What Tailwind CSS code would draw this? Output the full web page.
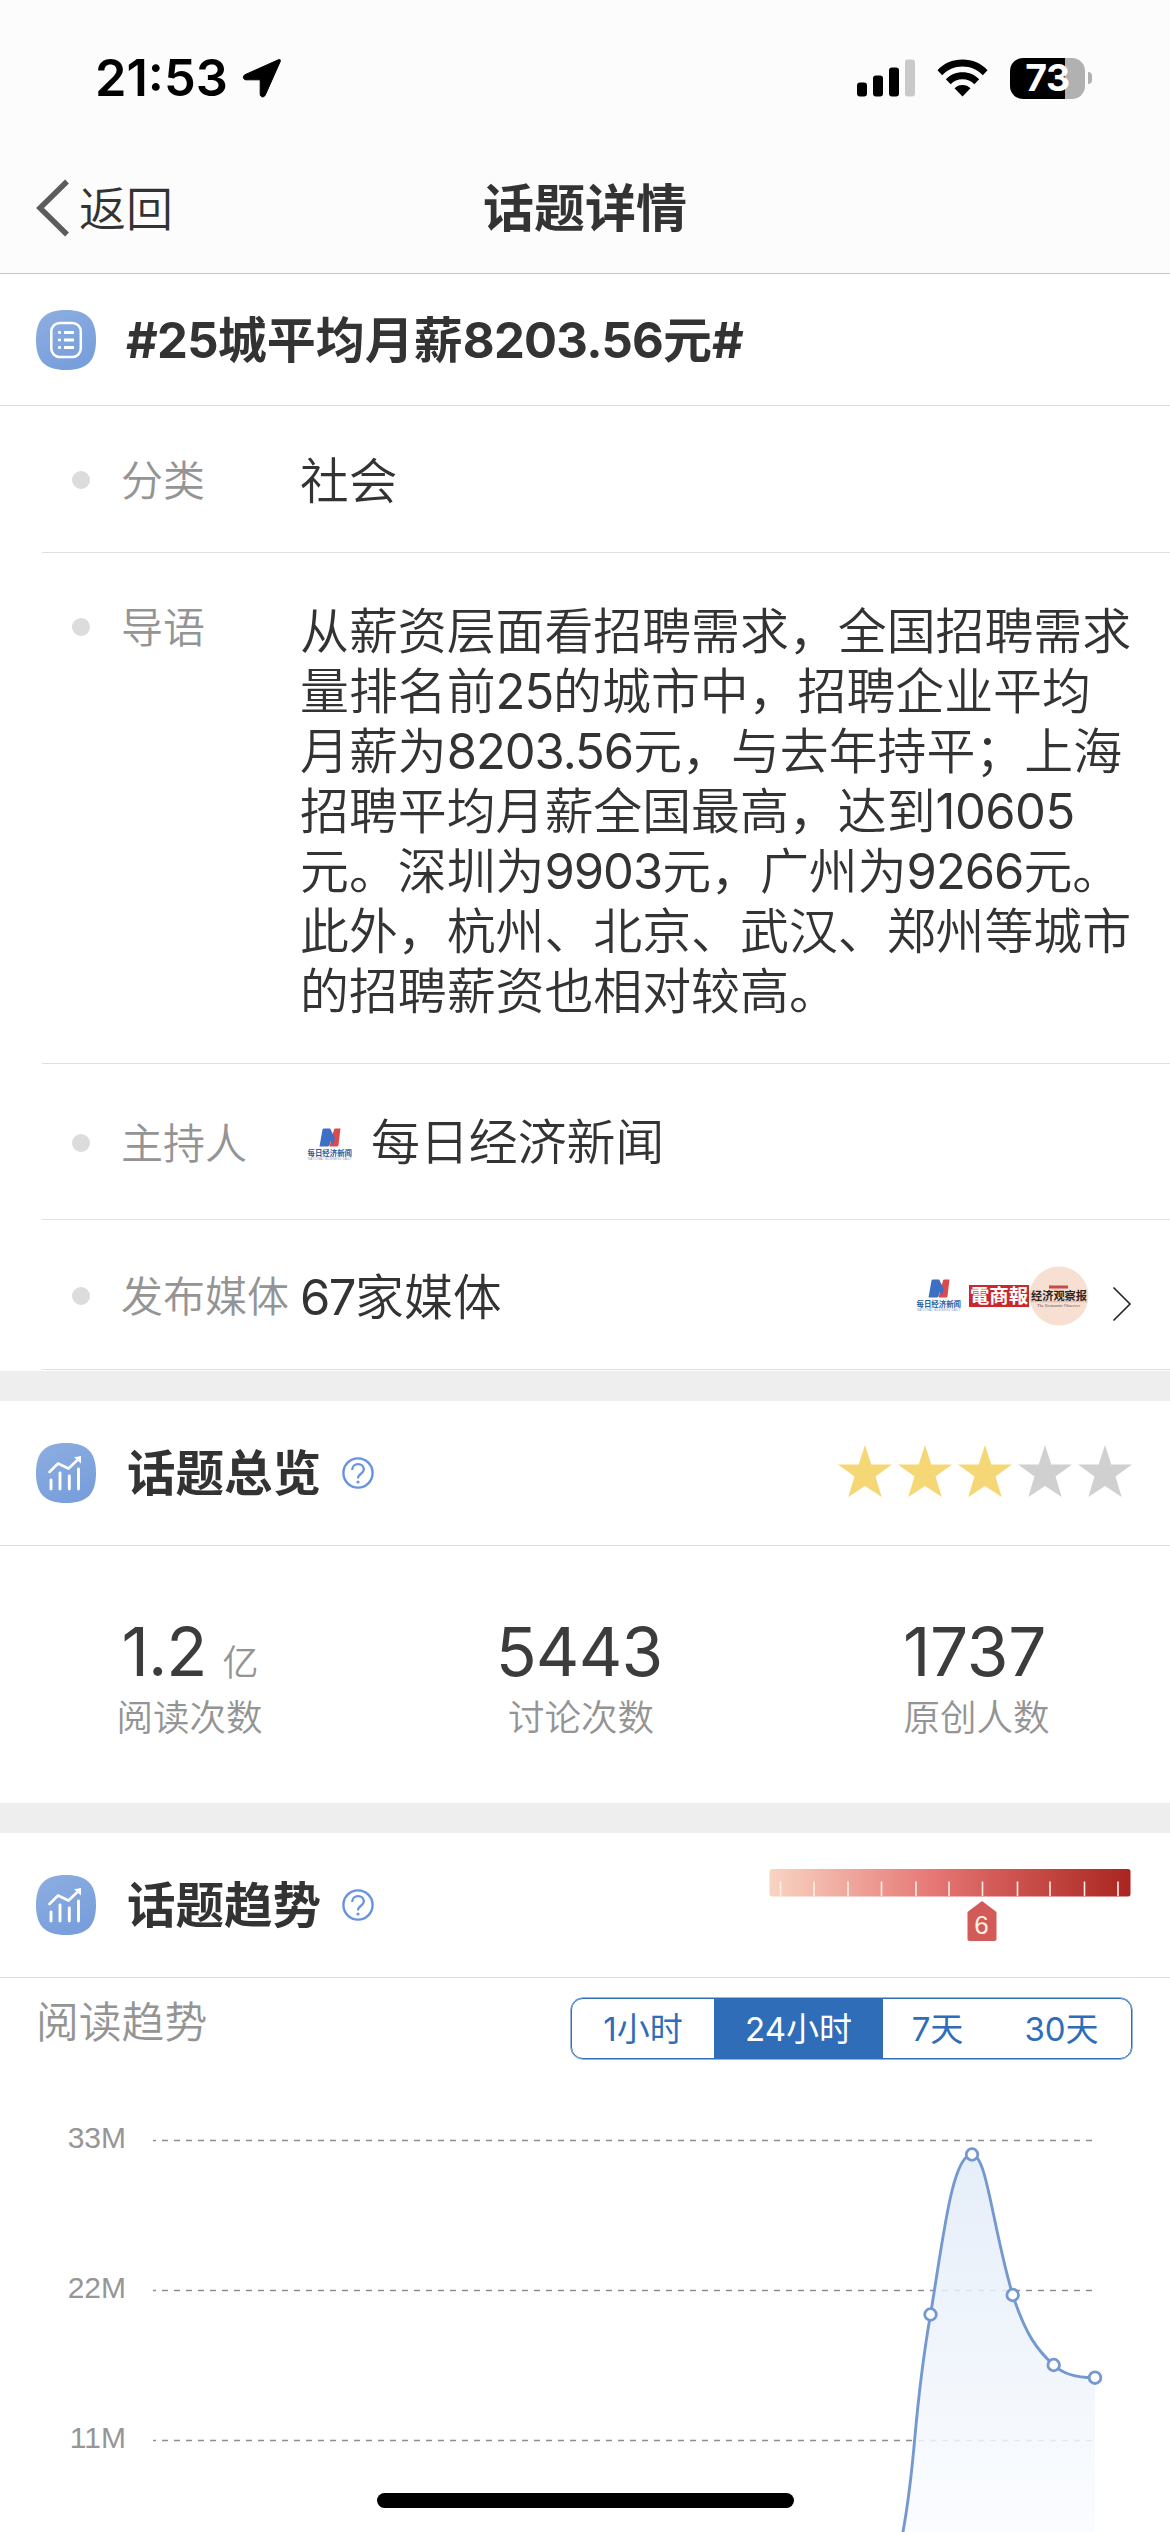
<!DOCTYPE html>
<html lang="zh-CN">
<head>
<meta charset="utf-8">
<title>话题详情</title>
<script src="https://cdn.jsdelivr.net/npm/@tailwindcss/browser@4"></script>
</head>
<body class="w-[1170px] h-[2532px] overflow-hidden bg-white font-['Inter','Noto_Sans_CJK_SC',sans-serif] text-[#333]">
<svg class="absolute size-0" aria-hidden="true">
  <defs>
    <linearGradient id="badge" x1="0.2" y1="0" x2="0.7" y2="1">
      <stop offset="0" stop-color="#8bade0"/><stop offset="1" stop-color="#779edb"/>
    </linearGradient>
    <symbol id="squircle" viewBox="0 0 60 60">
      <path d="M30 0C51 0 60 9 60 30S51 60 30 60 0 51 0 30 9 0 30 0Z" fill="url(#badge)"/>
    </symbol>
    <symbol id="trend" viewBox="0 0 60 60">
      <path d="M30 0C51 0 60 9 60 30S51 60 30 60 0 51 0 30 9 0 30 0Z" fill="url(#badge)"/>
      <path d="M13.500 29L22 20.500L32.500 25.500L43 15.500" fill="none" stroke="#fff" stroke-width="2.600" stroke-linecap="round" stroke-linejoin="round"/>
      <path d="M38 14.200L45 13V20.500Z" fill="#fff"/>
      <path d="M15 37V46M24 30V46M33.300 33V46M42.500 26V46" stroke="#fff" stroke-width="2.900" stroke-linecap="round"/>
    </symbol>
    <symbol id="help" viewBox="0 0 32 32">
      <circle cx="16" cy="16" r="14.600" fill="none" stroke="#6892e3" stroke-width="2.400"/>
      <path d="M10.200 13C10.200 9.400 12.600 7.200 16 7.200S21.800 9.400 21.800 12.500C21.800 16.700 16 16.500 16 21.500" fill="none" stroke="#6892e3" stroke-width="2.300"/>
      <circle cx="16" cy="25" r="1.600" fill="#6892e3"/>
    </symbol>
    <symbol id="star" viewBox="0 0 54 52">
      <path d="M27 0L33.300 19.500H54L37.500 31.500L43.700 52L27 41L10.300 52L16.500 31.500L0 19.500H20.700Z"/>
    </symbol>
    <symbol id="nbd" viewBox="0 0 46 34" overflow="visible">
      <path d="M15.500 1.500Q15.800 0.500 17 0.500H23L25.500 7L23 16Q22.500 18 21 18.500H12.500Z" fill="#3d6fc4"/>
      <path d="M27 1.500Q27.300 0.500 28.500 0.500H33.500L31.500 17Q31.300 18.500 30 18.500H22.500Z" fill="#dc4a4d"/>
      <path d="M23 0.500L28 10L25.500 17L21 7Z" fill="#3d6fc4"/>
      <text x="0.500" y="28" font-size="7.500" font-weight="700" textLength="44.500" lengthAdjust="spacingAndGlyphs" fill="#2a5ca0" font-family="Noto Sans CJK SC">每日经济新闻</text>
      <text x="1" y="32.300" font-size="3" textLength="43.500" fill="#7c9dc6" font-family="Liberation Sans">NATIONAL BUSINESS DAILY</text>
    </symbol>
  </defs>
</svg>

<main class="flex flex-col">
  <header class="h-[274px] bg-[#fcfcfc] border-b border-[#c4c4c4]">
    <div class="h-[154px] flex items-center justify-between pt-[2px] pl-[95px] pr-[78px]">
      <div class="flex items-center gap-[14px]">
        <span class="text-[50.5px] leading-[60px] font-semibold text-black">21:53</span>
        <svg class="w-[40px] h-[40px]" viewBox="0 0 40 40"><path d="M36.300 1.800L3 16.700C.5 18 1 21.800 4 21.800H18.200V36C18.200 39.500 22 39.800 23.300 37L38 4C39 1.800 38 1 36.300 1.800Z" fill="#000" stroke="#000" stroke-linejoin="round"/></svg>
      </div>
      <div class="flex items-center">
        <svg class="w-[58px] h-[38px]" viewBox="0 0 58 38"><rect x="0" y="23.500" width="10" height="14" rx="3"/><rect x="16" y="16.500" width="10" height="21" rx="3"/><rect x="32" y="8.500" width="10" height="29" rx="3"/><rect x="48" y="0.500" width="10" height="37" rx="3" fill="#c9c9c9"/></svg>
        <svg class="ml-[22px] w-[51px] h-[38px]" viewBox="0 0 51 38"><path d="M25.500 .5C35.500 .5 44.500 4.500 50.500 11.200L45.800 16.200C40.500 10.700 33.500 7.500 25.500 7.500S10.500 10.700 5.200 16.200L.5 11.200C6.500 4.500 15.500 .5 25.500 .5ZM25.500 13.200C32 13.200 37.800 15.700 42.200 20.300L37.300 25.200C34.200 22 30.200 20.200 25.500 20.200S16.800 22 13.700 25.200L8.800 20.300C13.200 15.700 19 13.200 25.500 13.200ZM25.500 26C28.700 26 31.500 27.200 33.500 29.300L25.500 37.500L17.500 29.300C19.500 27.200 22.300 26 25.500 26Z"/></svg>
        <div class="ml-[22px] w-[75px] h-[41px] rounded-[13px] bg-linear-to-r from-black from-[55px] to-[#b1b1b1] to-[55px] flex items-center justify-center text-white text-[37.5px] font-bold leading-none tracking-[-0.5px]">73</div>
        <div class="ml-[3px] w-[4px] h-[12px] rounded-r-full bg-[#b1b1b1]"></div>
      </div>
    </div>
    <div class="relative h-[110px] flex items-center justify-center">
      <div class="absolute left-[36px] inset-y-0 flex items-center gap-[9px]">
        <svg class="w-[34px] h-[60px]" viewBox="0 0 34 60" fill="none" stroke="#5c5c5c" stroke-width="5.500"><path d="M31 2.500L4 29L31 55.500"/></svg>
        <span class="text-[47px] leading-[60px] font-[350]">返回</span>
      </div>
      <h1 class="text-[51px] leading-[60px] font-bold">话题详情</h1>
    </div>
  </header>

  <section class="h-[132px] flex items-center gap-[30px] pl-[36px] border-b border-[#dcdcdc]">
    <svg class="size-[60px]" viewBox="0 0 60 60"><use href="#squircle"/><g fill="none" stroke="#fff"><rect x="15.300" y="13" width="29.500" height="34" rx="8.500" stroke-width="2.500"/><path d="M22 22.500H25M22 30H25M22 37.500H25" stroke-width="2.500"/><path d="M28 22.500H38M28 30H38M28 37.500H38" stroke-width="2.800"/></g></svg>
    <h2 class="text-[49px] leading-[60px] font-bold whitespace-nowrap pt-[2px]"><span class="tracking-[-0.75px]">#25</span>城平均月薪<span class="tracking-[-0.75px]">8203.56</span>元#</h2>
  </section>

  <section class="ml-[42px]">
    <div class="h-[147px] flex items-center pl-[30px] border-b border-[#dfdfdf]">
      <i class="size-[18px] mt-[2px] rounded-full bg-[#dcdcdc]"></i>
      <span class="ml-[31px] w-[179px] pt-[3px] text-[42px] leading-[60px] font-[350] text-[#949494]">分类</span>
      <span class="pt-[5px] text-[48.7px] leading-[60px] font-[350]">社会</span>
    </div>
    <div class="h-[511px] flex items-start pl-[30px] pt-[49px] border-b border-[#dfdfdf]">
      <i class="size-[18px] mt-[16px] rounded-full bg-[#dcdcdc]"></i>
      <span class="ml-[31px] w-[179px] -mt-[4px] text-[42px] leading-[60px] font-[350] text-[#949494]">导语</span>
      <p class="text-[48.9px] leading-[60px] font-[350] whitespace-nowrap">从薪资层面看招聘需求，全国招聘需求<br>量排名前<span class="font-normal tracking-[-1px]">25</span>的城市中，招聘企业平均<br>月薪为<span class="font-normal tracking-[-1px]">8203.56</span>元，与去年持平；上海<br>招聘平均月薪全国最高，达到<span class="font-normal tracking-[-0.5px]">10605</span><br>元。深圳为<span class="font-normal tracking-[-1px]">9903</span>元，广州为<span class="font-normal tracking-[-1px]">9266</span>元。<br>此外，杭州、北京、武汉、郑州等城市<br>的招聘薪资也相对较高。</p>
    </div>
    <div class="h-[156px] flex items-center pl-[30px] pt-[2px] border-b border-[#dfdfdf]">
      <i class="size-[18px] rounded-full bg-[#dcdcdc]"></i>
      <span class="ml-[31px] w-[186px] pt-[2px] text-[42px] leading-[60px] font-[350] text-[#949494]">主持人</span>
      <svg class="w-[46px] h-[34px] mt-[4px] mr-[18px] overflow-visible"><use href="#nbd"/></svg>
      <span class="text-[48.9px] leading-[60px] font-[350]">每日经济新闻</span>
    </div>
    <div class="h-[150px] flex items-center pl-[30px] pt-[3px] border-b border-[#dfdfdf]">
      <i class="size-[18px] rounded-full bg-[#dcdcdc]"></i>
      <span class="ml-[31px] w-[179px] pt-[2px] text-[42px] leading-[60px] font-[350] text-[#949494]">发布媒体</span>
      <span class="pt-[3px] text-[48.9px] leading-[60px] font-[350]"><span class="font-normal tracking-[-1.5px]">67</span>家媒体</span>
      <div class="ml-auto mr-[38px] flex items-center">
        <svg class="w-[46px] h-[34px] mr-[7px] overflow-visible"><use href="#nbd"/></svg>
        <svg class="w-[60px] h-[24px] overflow-visible" viewBox="0 0 60 24"><rect y="1" width="60" height="22" fill="#c9282d"/><text x="1" y="19" font-size="19" font-weight="700" textLength="58" lengthAdjust="spacingAndGlyphs" fill="#fff" font-family="Noto Sans CJK SC, sans-serif">電商報</text></svg>
        <svg class="w-[60px] h-[60px] overflow-visible" viewBox="0 0 60 60"><circle cx="30" cy="30" r="29.500" fill="#f7dfd2"/><rect x="20" y="19.500" width="19" height="3" fill="#c9484a"/><text x="2" y="34" font-size="11.500" font-weight="700" textLength="56" lengthAdjust="spacingAndGlyphs" fill="#2c2424" font-family="Noto Sans CJK SC, sans-serif">经济观察报</text><path d="M2 35.700H58" stroke="#d79a92" stroke-width="0.600"/><text x="8" y="40.500" font-size="4.500" textLength="43" fill="#6b5550" font-family="Liberation Serif">The Economic Observer</text></svg>
        <svg class="ml-[23px] mt-[16px] w-[20px] h-[36px]" viewBox="0 0 20 36" fill="none" stroke="#222" stroke-width="1.600"><path d="M1.500 1.500L18 18L1.500 34.500"/></svg>
      </div>
    </div>
  </section>
  <div class="mt-px h-[30px] bg-[#eee]"></div>

  <section class="h-[145px] flex items-center pl-[36px] pr-[38px] border-b border-[#dfdfdf]">
    <svg class="size-[60px]"><use href="#trend"/></svg>
    <h2 class="ml-[31px] pt-[2px] text-[48.5px] leading-[60px] font-bold">话题总览</h2>
    <svg class="ml-[21px] size-[32px]"><use href="#help"/></svg>
    <div class="ml-auto flex gap-[6px] -mt-[4px]">
      <svg class="w-[54px] h-[52px] fill-[#f6d775]"><use href="#star"/></svg>
      <svg class="w-[54px] h-[52px] fill-[#f6d775]"><use href="#star"/></svg>
      <svg class="w-[54px] h-[52px] fill-[#f6d775]"><use href="#star"/></svg>
      <svg class="w-[54px] h-[52px] fill-[#d0d0d0]"><use href="#star"/></svg>
      <svg class="w-[54px] h-[52px] fill-[#d0d0d0]"><use href="#star"/></svg>
    </div>
  </section>
  <section class="h-[257px] grid grid-cols-[379px_400px_391px] pt-[66px] text-center">
    <div>
      <div class="h-[80px] text-[67.5px] leading-[80px] text-[#3c3c3c] whitespace-nowrap tracking-[-1px]">1.2<span class="ml-[16px] text-[36px] leading-none font-[350] text-[#949494]">亿</span></div>
      <div class="mt-[3px] text-[36.5px] leading-[46px] font-[350] text-[#949494]">阅读次数</div>
    </div>
    <div>
      <div class="h-[80px] text-[67.5px] leading-[80px] text-[#3c3c3c] tracking-[-0.8px]">5443</div>
      <div class="mt-[3px] pl-[4px] text-[36.5px] leading-[46px] font-[350] text-[#949494]">讨论次数</div>
    </div>
    <div>
      <div class="h-[80px] text-[67.5px] leading-[80px] text-[#3c3c3c] tracking-[-0.3px]">1737</div>
      <div class="mt-[3px] pl-[4px] text-[36.5px] leading-[46px] font-[350] text-[#949494]">原创人数</div>
    </div>
  </section>
  <div class="h-[30px] bg-[#eee]"></div>

  <section class="h-[145px] flex items-center pl-[36px] pr-[39px] border-b border-[#dfdfdf]">
    <svg class="size-[60px]"><use href="#trend"/></svg>
    <h2 class="ml-[31px] pt-[2px] text-[48.5px] leading-[60px] font-bold">话题趋势</h2>
    <svg class="ml-[21px] size-[32px]"><use href="#help"/></svg>
    <svg class="ml-auto w-[362px] h-[74px]" viewBox="0 0 362 74">
      <defs><linearGradient id="heat"><stop offset="0" stop-color="#f8d4c2"/><stop offset="0.450" stop-color="#e67876"/><stop offset="0.620" stop-color="#d35b57"/><stop offset="1" stop-color="#a92520"/></linearGradient></defs>
      <rect x="0.500" y="1" width="361" height="27.500" rx="2.500" fill="url(#heat)"/>
      <path d="M11.500 13.500V28M45 13.500V28M79 13.500V28M112.500 13.500V28M147 13.500V28M180 13.500V28M213.500 13.500V28M248.500 13.500V28M281 13.500V28M315.500 13.500V28M349 13.500V28" stroke="#fdeee6" stroke-width="1.600"/>
      <path d="M213 33L227.500 44V71Q227.500 73 225.500 73H200.500Q198.500 73 198.500 71V44Z" fill="#d35b57"/>
      <text x="212.500" y="66" font-size="26" text-anchor="middle" fill="#fdf0e6" font-family="Liberation Sans">6</text>
    </svg>
  </section>

  <section class="relative h-[554px]">
    <div class="flex items-start justify-between pt-[20px] pl-[36px] pr-[38px]">
      <span class="-mt-[5px] text-[42.800px] leading-[60px] font-[350] text-[#949494]">阅读趋势</span>
      <div class="w-[561px] h-[61px] flex items-stretch border border-[#2f6db9] ring-[0.5px] ring-[#2f6db9] rounded-[12px] overflow-hidden text-[33px] leading-[60px] font-[370] text-center text-[#2f6db9]">
        <span class="w-[142px]">1小时</span>
        <span class="w-[169px] bg-[#2f6db9] text-white">24小时</span>
        <span class="w-[109px]">7天</span>
        <span class="w-[139px]">30天</span>
      </div>
    </div>
    <svg class="w-[1170px] h-[473px]" viewBox="0 2059 1170 473">
      <defs><linearGradient id="area" gradientUnits="userSpaceOnUse" x1="0" y1="2154" x2="0" y2="2560"><stop offset="0" stop-color="#e1ebf8"/><stop offset="1" stop-color="#fcfdff"/></linearGradient></defs>
      <g fill="#969696" font-family="Liberation Sans" font-size="30" text-anchor="end">
        <text x="126" y="2148">33M</text><text x="126" y="2298">22M</text><text x="126" y="2448">11M</text>
      </g>
      <path d="M153 2140.500H1093M153 2290.500H1093M153 2440.500H1093" stroke="#8e8e8e" stroke-width="1.400" stroke-dasharray="6 6" stroke-dashoffset="3"/>
      <path d="M903 2532C917 2460 912 2420 930.500 2314.500C943 2240 952 2154.500 972 2154.500C987 2155 992 2225 1012.700 2295C1026 2335 1037 2350 1053.700 2365C1062 2373 1076 2378 1095 2377.700V2532Z" fill="url(#area)" fill-opacity="0.850"/>
      <path d="M902 2537C917 2460 912 2420 930.500 2314.500C943 2240 952 2154.500 972 2154.500C987 2155 992 2225 1012.700 2295C1026 2335 1037 2350 1053.700 2365C1062 2373 1076 2378 1095 2377.700" fill="none" stroke="#7499d1" stroke-width="2.900"/>
      <g fill="#fff" stroke="#7499d1" stroke-width="2.800"><circle cx="930.500" cy="2314.500" r="5.800"/><circle cx="972" cy="2154.500" r="5.800"/><circle cx="1012.700" cy="2295" r="5.800"/><circle cx="1053.700" cy="2365" r="5.800"/><circle cx="1095" cy="2377.700" r="5.800"/></g>
    </svg>
    <div class="absolute left-[377px] bottom-[24px] w-[417px] h-[15px] rounded-full bg-black"></div>
  </section>
</main>
</body>
</html>
